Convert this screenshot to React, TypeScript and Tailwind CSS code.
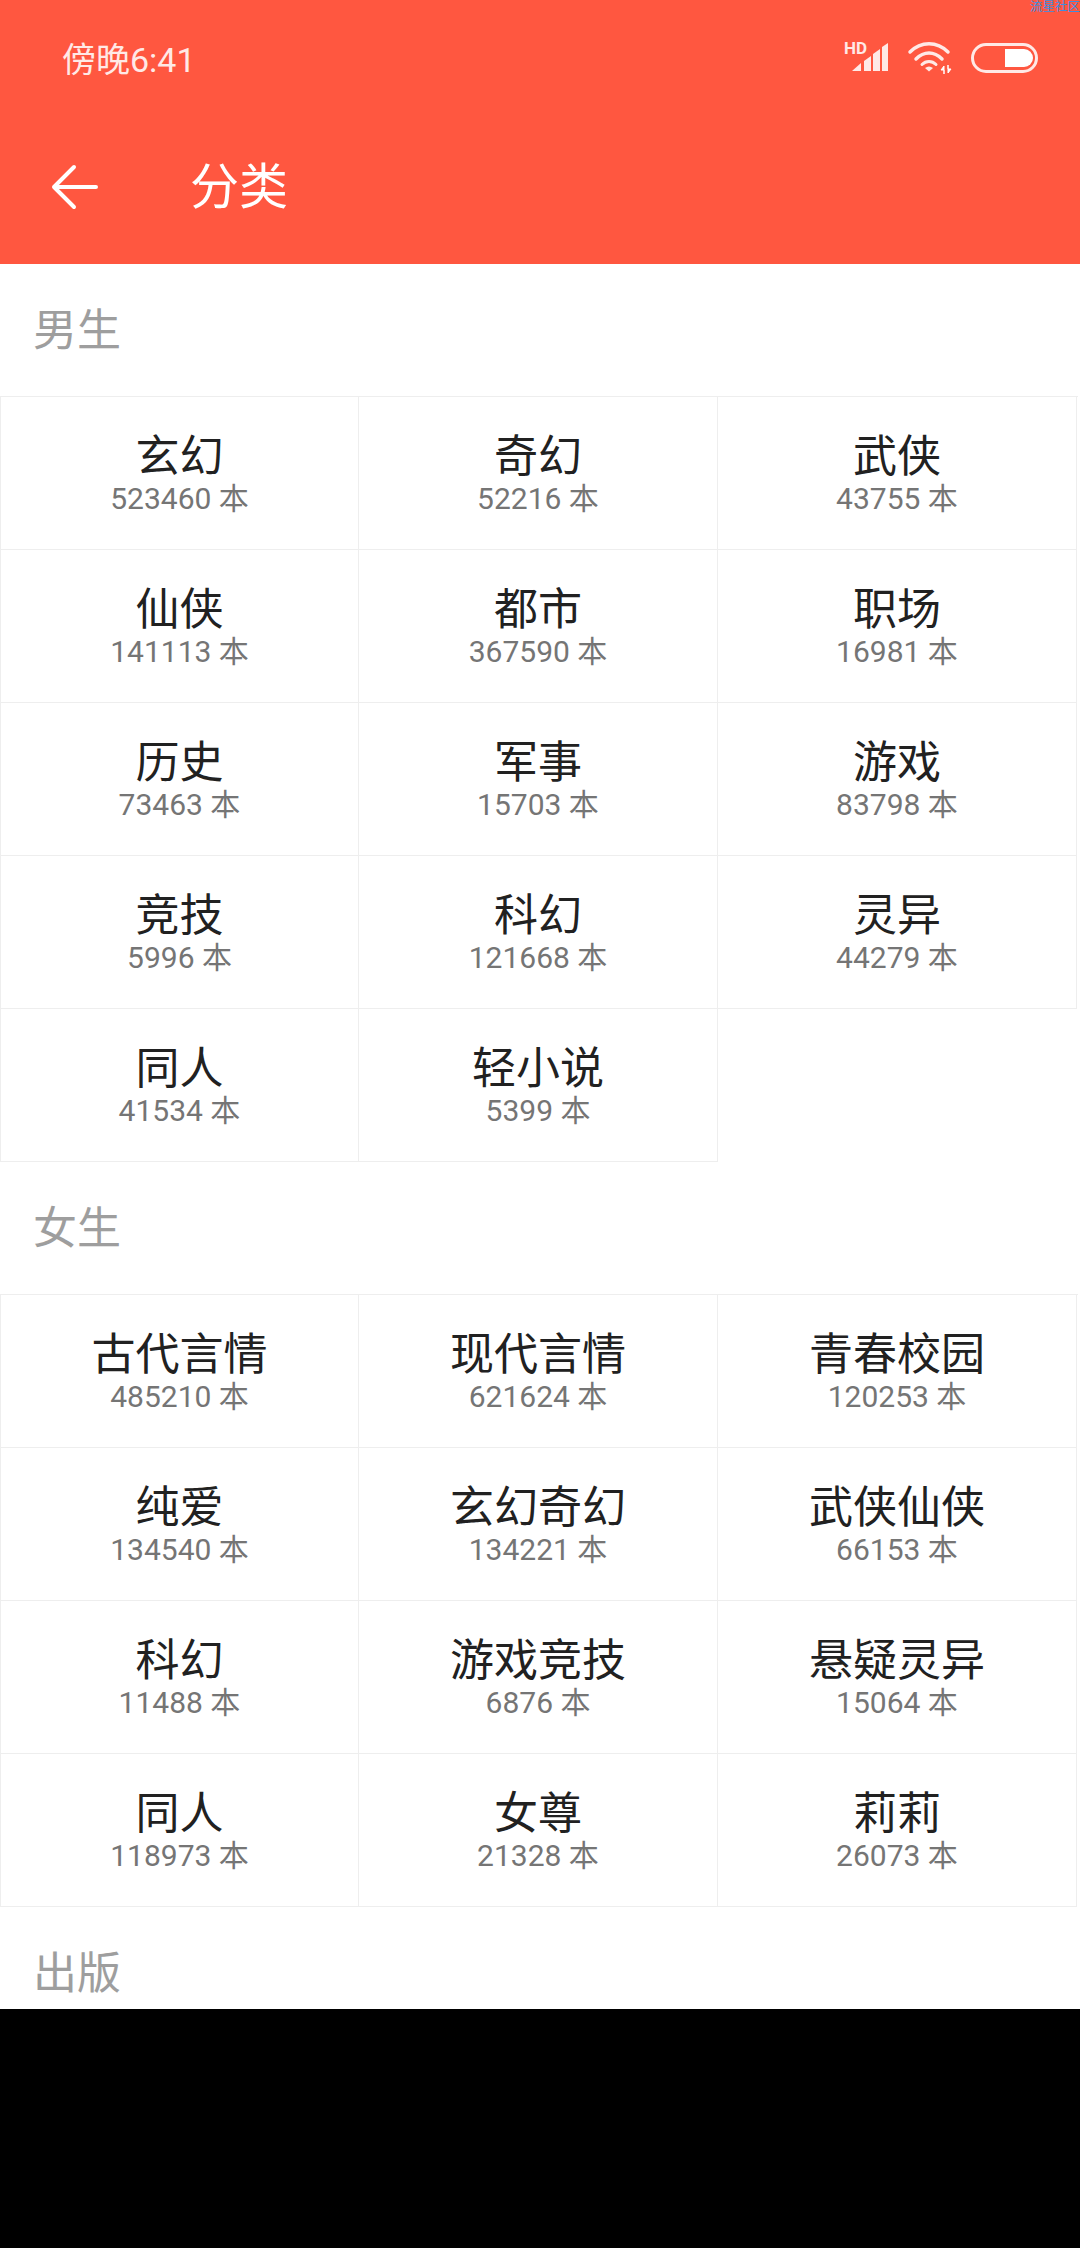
type Item = [string, string];

const male: Item[] = [
  ["玄幻", "523460"], ["奇幻", "52216"], ["武侠", "43755"],
  ["仙侠", "141113"], ["都市", "367590"], ["职场", "16981"],
  ["历史", "73463"], ["军事", "15703"], ["游戏", "83798"],
  ["竞技", "5996"], ["科幻", "121668"], ["灵异", "44279"],
  ["同人", "41534"], ["轻小说", "5399"],
];

const female: Item[] = [
  ["古代言情", "485210"], ["现代言情", "621624"], ["青春校园", "120253"],
  ["纯爱", "134540"], ["玄幻奇幻", "134221"], ["武侠仙侠", "66153"],
  ["科幻", "11488"], ["游戏竞技", "6876"], ["悬疑灵异", "15064"],
  ["同人", "118973"], ["女尊", "21328"], ["莉莉", "26073"],
];

function Heading({ text }: { text: string }) {
  return (
    <div className="h-[132px] flex items-center pl-[33px] pt-[2px] text-[44px] leading-none text-[#9e9e9e]">
      {text}
    </div>
  );
}

function Cell({ name, count }: Item) {
  return (
    <div className="h-[153px] border-r border-b border-[#eeeeee] flex flex-col items-center pt-[37px]">
      <div className="text-[44px] leading-[46px] text-[#212121]">{name}</div>
      <div className="text-[30px] leading-[38px] text-[#757575]">{count} 本</div>
    </div>
  );
}

function Grid({ items }: { items: Item[] }) {
  return (
    <div className="w-[1078px] border-t border-[#eeeeee]">
      <div className="grid grid-cols-[repeat(3,359px)]">
        {items.map((it, i) => (
          <div key={i} className={i % 3 === 0 ? "border-l border-[#eeeeee]" : ""}>
            <Cell name={it[0]} count={it[1]} />
          </div>
        ))}
      </div>
    </div>
  );
}

function StatusIcons() {
  const c = "#ffe9e6";
  return (
    <svg width="200" height="40" viewBox="0 0 200 40" fill="none">
      <text x="6" y="15.5" fill={c} fontSize="17" fontWeight="700" fontFamily="Roboto, sans-serif">HD</text>
      <path d="M14 33 L23 25 V33 Z" fill={c} />
      <path d="M26 33 V23 L33 18 V33 Z" fill={c} />
      <path d="M35 33 V16 L42 11 V33 Z" fill={c} />
      <path d="M44 33 V9 L50 5 V33 Z" fill={c} />
      <path d="M72 14 C83 3 99 3 110 14" stroke={c} strokeWidth="3.5" strokeLinecap="round" />
      <path d="M78 21 C86 13 96 13 104 21" stroke={c} strokeWidth="3.5" strokeLinecap="round" />
      <path d="M84 26.5 C88 22.5 94 22.5 98 26.5" stroke={c} strokeWidth="3" strokeLinecap="round" />
      <path d="M87 30 Q91 27 95 30 L91 33.5 Z" fill={c} />
      <path d="M106 36 V28 L103 32 H106 Z" fill="#ffffff" stroke="#ffffff" strokeWidth="1" />
      <path d="M110 27 V35 L113 31 H110 Z" fill="#ffffff" stroke="#ffffff" strokeWidth="1" />
      <rect x="134.5" y="6.5" width="64" height="27" rx="13.5" stroke={c} strokeWidth="3" />
      <path d="M167 11 H186 A9 9 0 0 1 186 29 H167 Z" fill="#ffffff" />
    </svg>
  );
}

export default function App() {
  return (
    <div className="w-[1080px] h-[2248px] bg-black overflow-hidden" style={{ fontFamily: "Roboto, 'Noto Sans CJK SC', sans-serif" }}>
      <div className="h-[2009px] bg-white overflow-hidden">
        <div className="h-[264px] bg-[#ff5740] relative">
          <div className="h-[120px] flex items-start justify-between">
            <div className="pl-[62px] pt-[38px] text-[34px] leading-[44px] text-[#ffe9e6]">傍晚6:41</div>
            <div className="pt-[38px] pr-[42px]"><StatusIcons /></div>
          </div>
          <div className="absolute right-0 top-0 text-[12.5px] leading-[14px] whitespace-nowrap text-[#3d8ee0] w-[50px]">流星社区</div>
          <div className="h-[144px] flex items-start">
            <svg className="ml-[50px] mt-[42px]" width="50" height="50" viewBox="0 0 50 50" fill="none">
              <path d="M24 5 L4 25 L24 45 M4 25 H46" stroke="#ffffff" strokeWidth="4" strokeLinecap="round" strokeLinejoin="round" />
            </svg>
            <div className="ml-[90px] mt-[40px] text-[49px] leading-[56px] text-white">分类</div>
          </div>
        </div>
        <Heading text="男生" />
        <Grid items={male} />
        <Heading text="女生" />
        <Grid items={female} />
        <Heading text="出版" />
      </div>
    </div>
  );
}
